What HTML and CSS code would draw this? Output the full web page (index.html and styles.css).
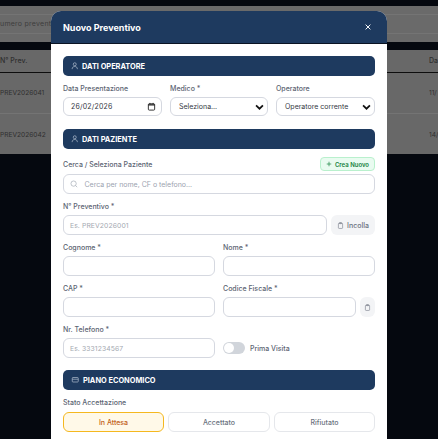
FILE: index.html
```html
<!DOCTYPE html>
<html lang="it">
<head>
<meta charset="utf-8">
<title>Nuovo Preventivo</title>
<link rel="stylesheet" href="styles.css">
</head>
<body>
<div class="page">
  <div class="strip-top"></div>
  <div class="search-band"><div class="search-row"><span>umero preventivo</span></div></div>
  <div class="strip-mid"></div>
  <div class="table">
    <div class="thead"><span>N° Prev.</span><span>Da</span></div>
    <div class="trow"><span>PREV2026041</span><span>11/</span></div>
    <div class="trow"><span>PREV2026042</span><span>14/</span></div>
  </div>
</div>

<section class="modal">
  <header class="modal-head">
    <h2>Nuovo Preventivo</h2>
    <svg class="close" viewBox="0 0 10 10"><path d="M2 2l6 6M8 2l-6 6"/></svg>
  </header>
  <div class="modal-body">
    <div class="bar">
      <svg class="bar-ico" viewBox="0 0 10 10"><circle cx="5" cy="3" r="2"/><path d="M1.5 9.5c0-2.4 1.5-3.5 3.5-3.5s3.500 1.100 3.500 3.500"/></svg>
      <span>DATI OPERATORE</span>
    </div>
    <div class="cols3">
      <div class="field">
        <label>Data Presentazione</label>
        <div class="input value date"><span>26/02/2026</span>
          <svg class="cal" viewBox="0 0 10 10"><rect x="1.500" y="2" width="7" height="7" rx="1"/><path class="cal-head" d="M1.500 3.300h7"/><path d="M3.200 1v1.500M6.800 1v1.500"/></svg>
        </div>
      </div>
      <div class="field">
        <label>Medico *</label>
        <div class="input value select"><span>Seleziona...</span><svg class="chev" viewBox="0 0 10 7"><path d="M1 1.500l4 4 4-4"/></svg></div>
      </div>
      <div class="field">
        <label>Operatore</label>
        <div class="input value select"><span>Operatore corrente</span><svg class="chev" viewBox="0 0 10 7"><path d="M1 1.500l4 4 4-4"/></svg></div>
      </div>
    </div>

    <div class="bar">
      <svg class="bar-ico" viewBox="0 0 10 10"><circle cx="5" cy="3" r="2"/><path d="M1.5 9.5c0-2.4 1.5-3.5 3.5-3.5s3.500 1.100 3.500 3.500"/></svg>
      <span>DATI PAZIENTE</span>
    </div>
    <div class="search-field">
      <div class="label-row">
        <label>Cerca / Seleziona Paziente</label>
        <button class="new"><svg viewBox="0 0 8 8"><path d="M4 1v6M1 4h6"/></svg>Crea Nuovo</button>
      </div>
      <div class="input search">
        <svg class="glass" viewBox="0 0 10 10"><circle cx="4.500" cy="4.500" r="3.300"/><path d="M7 7l2 2"/></svg>
        <span class="ph">Cerca per nome, CF o telefono...</span>
      </div>
    </div>
    <div class="field gap">
      <label>N° Preventivo *</label>
      <div class="with-btn">
        <div class="input grow"><span class="ph small">Es. PREV2026001</span></div>
        <button class="paste"><svg class="clip" viewBox="0 0 10 10"><rect x="2" y="1.800" width="6" height="7.400" rx="1"/><rect x="3.500" y="0.800" width="3" height="1.600" rx=".5"/></svg>Incolla</button>
      </div>
    </div>
    <div class="cols2">
      <div class="field"><label>Cognome *</label><div class="input"></div></div>
      <div class="field"><label>Nome *</label><div class="input"></div></div>
      <div class="field"><label>CAP *</label><div class="input"></div></div>
      <div class="field">
        <label>Codice Fiscale *</label>
        <div class="with-btn tight">
          <div class="input grow"></div>
          <button class="paste icon"><svg class="clip" viewBox="0 0 10 10"><rect x="2" y="1.800" width="6" height="7.400" rx="1"/><rect x="3.500" y="0.800" width="3" height="1.600" rx=".5"/></svg></button>
        </div>
      </div>
      <div class="field"><label>Nr. Telefono *</label><div class="input"><span class="ph small">Es. 3331234567</span></div></div>
      <div class="toggle-cell"><span class="toggle"><i></i></span><span class="toggle-label">Prima Visita</span></div>
    </div>

    <div class="bar">
      <svg class="bar-ico card" viewBox="0 0 10 10"><rect x="1" y="2" width="8" height="6" rx="1"/><path d="M1 4.300h8"/></svg>
      <span>PIANO ECONOMICO</span>
    </div>
    <div class="field">
      <label>Stato Accettazione</label>
      <div class="states">
        <button class="state active">In Attesa</button>
        <button class="state">Accettato</button>
        <button class="state">Rifiutato</button>
      </div>
    </div>
  </div>
</section>
</body>
</html>
```
FILE: styles.css
```css
* { box-sizing: border-box; }
html, body { margin: 0; height: 100%; overflow: hidden; }
body { background: #05080f; font-family: Inter, "Noto Sans", sans-serif; color: #4b5563; }
button { font-family: inherit; border: 0; padding: 0; margin: 0; }
label { display: block; font-size: 7px; line-height: 9px; font-weight: 500; color: #5c6472; }

.page { width: 100%; }
.strip-top { height: 6px; background: #05080f; }
.search-band { height: 36px; background: #6a6a6a; padding-top: 8px; }
.search-row { height: 20px; border-top: 1px solid #747474; border-bottom: 1px solid #747474; font-size: 7px; line-height: 18px; color: #3d3d3d; white-space: nowrap; letter-spacing: .25px; }
.strip-mid { height: 8px; background: #05080f; }
.table { height: 104px; background: #686868; color: #2f2f2f; font-size: 7px; }
.thead { height: 23px; display: flex; justify-content: space-between; padding: 5px 0 0 0; line-height: 12px; border-bottom: 1px solid #0d0d0d; font-weight: 500; }
.thead span:last-child, .trow span:last-child { width: 9px; overflow: hidden; white-space: nowrap; }
.trow { height: 41px; display: flex; justify-content: space-between; align-items: center; border-bottom: 1px solid #747474; font-size: 6.600px; }
.trow:last-child { border-bottom: 0; }

.modal { position: absolute; left: 51px; top: 11px; width: 336px; height: 428px; background: #fff; border-radius: 10px 10px 0 0; overflow: hidden; }
.modal-head { height: 33px; background: #1e3a5f; border-bottom: 1px solid #0a1322; display: flex; justify-content: space-between; align-items: center; padding: 0 15px 0 12px; }
.modal-head h2 { margin: 0; color: #fff; font-size: 9px; font-weight: 700; }
.close { width: 8px; height: 8px; fill: none; stroke: #fff; stroke-width: 1.200; }
.modal-body { padding: 12px 12px 0; display: flex; flex-direction: column; }

.bar { height: 20px; background: #1e3a5f; border-radius: 5px; display: flex; align-items: center; gap: 3.500px; padding: 0 8px; color: #fff; font-size: 7.400px; font-weight: 700; flex: none; }
.bar-ico { width: 7.500px; height: 7.500px; fill: none; stroke: #b8c4d4; stroke-width: .9; }

.cols3 { display: grid; grid-template-columns: 99px 1fr 99px; column-gap: 8px; margin: 8px 0 13px; }
.cols3 .input { height: 19px; }
.field { display: flex; flex-direction: column; gap: 4px; min-width: 0; }
.input { height: 20px; border: 1px solid #d5d8e0; border-radius: 6px; background: #fff; display: flex; align-items: center; }
.value { font-size: 7px; color: #33383f; justify-content: space-between; padding: 0 7px; }
.select { padding: 0 3px 0 8px; }
.date { letter-spacing: .2px; padding-right: 5px; }
.cal { width: 9px; height: 9px; fill: none; stroke: #222; stroke-width: 1; }
.cal-head { stroke-width: 1.400; }
.chev { width: 9px; height: 6px; fill: none; stroke: #111; stroke-width: 2; }

.search-field { margin-top: 8px; }
.label-row { display: flex; justify-content: space-between; align-items: center; height: 14px; margin-bottom: 3px; }
.new { width: 55px; height: 14px; background: #e9fbf0; border: 1px solid #b9f0cd; border-radius: 4px; color: #15803d; font-size: 6px; font-weight: 600; display: flex; align-items: center; justify-content: center; gap: 3px; }
.new svg { width: 6px; height: 6px; fill: none; stroke: #15803d; stroke-width: .9; }
.search { padding: 0 6px; gap: 6.500px; }
.glass { width: 8px; height: 8px; fill: none; stroke: #9ca3af; stroke-width: .8; }
.ph { font-size: 7px; color: #9ca3af; }
.small { font-size: 6.800px; color: #a4a9b1; padding-left: 6px; letter-spacing: .1px; }

.gap { margin-top: 8px; }
.with-btn { display: flex; gap: 4px; }
.grow { flex: 1; min-width: 0; }
.paste { width: 44px; height: 20px; background: #f3f4f6; border-radius: 6px; color: #6b7280; font-size: 7px; font-weight: 500; display: flex; align-items: center; justify-content: center; gap: 3px; flex: none; }
.paste.icon { width: 15px; }
.clip { width: 7px; height: 7px; fill: none; stroke: #6b7280; stroke-width: .8; }

.cols2 { display: grid; grid-template-columns: 152px 152px; column-gap: 8px; row-gap: 8px; margin: 8px 0 12px; }
.toggle-cell { display: flex; align-items: center; gap: 5px; padding-top: 13px; }
.toggle { width: 22px; height: 12px; border-radius: 6px; background: #d1d5db; padding: 1px; display: block; flex: none; }
.toggle i { display: block; width: 10px; height: 10px; border-radius: 50%; background: #fff; }
.toggle-label { font-size: 7px; font-weight: 500; color: #5c6472; }

.bar + .field { margin-top: 8px; }
.states { display: grid; grid-template-columns: 101px 1fr 101px; column-gap: 4px; margin-top: 1px; }
.state { height: 20px; background: #fff; border: 1px solid #e5e7eb; border-radius: 6px; color: #6b7280; font-size: 7px; font-weight: 500; }
.state.active { background: #fff9e8; border-color: #f5b81f; color: #c2601a; }
.card { width: 8.500px; }
```
